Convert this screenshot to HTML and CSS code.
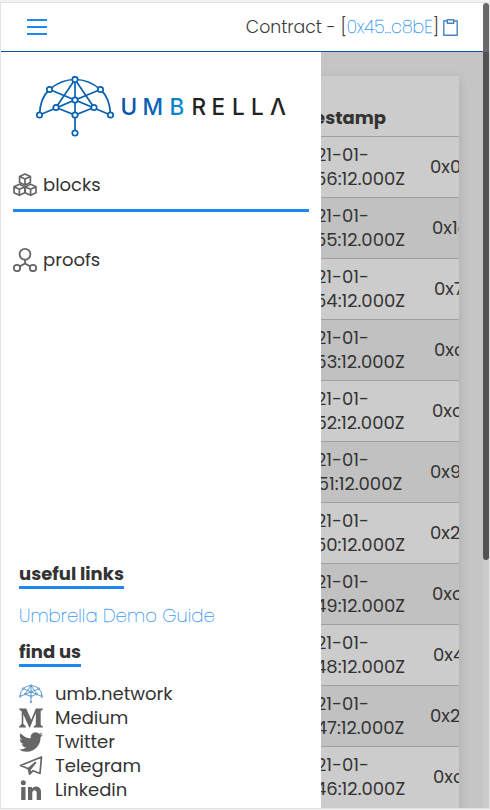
FILE: index.html
```html
<!DOCTYPE html>
<html lang="en">
<head>
<meta charset="utf-8">
<title>Umbrella blocks</title>
<link rel="stylesheet" href="styles.css">
</head>
<body>
<svg class="defs" width="0" height="0">
  <defs>
    <linearGradient id="word" gradientUnits="userSpaceOnUse" x1="86" y1="0" x2="150" y2="0"><stop offset="0" stop-color="#0651a5"/><stop offset=".55" stop-color="#0866b8"/><stop offset="1" stop-color="#0b93d5"/></linearGradient>
    <symbol id="umbrella" viewBox="0 0 78 62">
      <path d="M3.5 39Q4 22 13.5 13.5Q25 3.500 39 3.500T64.500 13.500Q74 22 74.500 39M13.500 13.500 39 24 64.500 13.500M39 3.500V57M39 3.500 20 31.500M39 3.500 58 31.500M3.500 39 39 24 74.500 39M20 31.500 39 39 58 31.500" fill="none" stroke="currentColor"/>
      <g fill="#fff" stroke="currentColor"><circle cx="39" cy="3.500" r="2.700"/><circle cx="13.500" cy="13.500" r="2.700"/><circle cx="64.500" cy="13.500" r="2.700"/><circle cx="39" cy="24" r="2.700"/><circle cx="20" cy="31.500" r="2.700"/><circle cx="58" cy="31.500" r="2.700"/><circle cx="3.500" cy="39" r="2.700"/><circle cx="39" cy="39" r="2.700"/><circle cx="74.500" cy="39" r="2.700"/><circle cx="39" cy="57" r="2.700"/></g>
    </symbol>
  </defs>
</svg>
<div class="app">
  <header class="topbar">
    <div class="burger"><i></i><i></i><i></i></div>
    <div class="contract"><span class="label">Contract - [</span><a>0x45...c8bE</a><span>]</span>
      <svg class="clip" width="15" height="17" viewBox="0 0 15 17" fill="none" stroke="#4584c4" stroke-width="1.4"><path d="M4 2H.8v14.200h13.400V2H11"/><path d="M4.300.8h6.400v3.400H4.300z"/></svg>
    </div>
  </header>
  <main class="content">
    <section class="card">
      <div class="head">Timestamp</div>
      <div class="rows" id="rows"></div>
    </section>
  </main>
  <aside class="sidebar">
    <svg class="logo" width="252" height="62" viewBox="0 0 252 62">
      <use class="brand" href="#umbrella" width="78" height="62"/>
      <text class="wordmark" y="38.600" x="84.500 106.500 133.500" fill="url(#word)">UMB</text>
      <text class="wordmark" y="38.600" x="155.500 175.500 196 215 234" fill="#222">RELLΛ</text>
    </svg>
    <nav class="nav">
      <a class="item active">
        <svg width="24" height="24" viewBox="0 0 24 24" fill="none" stroke="#666" stroke-width="1.700" stroke-linejoin="round"><path id="cube" d="M12 1l5.400 2.500v6L12 12 6.600 9.500v-6zM6.600 3.500 12 6l5.400-2.500M12 6v6"/><use href="#cube" x="-5.600" y="10.300"/><use href="#cube" x="5.600" y="10.300"/></svg>
        <span>blocks</span></a>
      <a class="item">
        <svg width="24" height="24" viewBox="0 0 24 24" fill="none" stroke="#666" stroke-width="1.800"><circle cx="12" cy="6.300" r="5.400"/><circle cx="4" cy="20" r="3.200"/><circle cx="20" cy="20" r="3.200"/><path d="M12 11.700V15.500L6.800 18.400M12 15.500l5.200 2.900"/></svg>
        <span>proofs</span></a>
    </nav>
    <div class="links">
      <h2>useful links</h2>
      <a class="guide">Umbrella Demo Guide</a>
      <h2>find us</h2>
      <ul class="social">
        <li><svg class="mini" width="24" height="20"><use href="#umbrella" width="24" height="20"/></svg><span>umb.network</span></li>
        <li><svg width="24" height="20" viewBox="0 0 24 20" fill="#666"><path d="M0 .5h7.200l5 11.300L16.800.5H24v.7l-2.300 1.900v13.700l2.300 1.900v.8h-9.500v-.8l2.300-1.900V5L11 19.500h-.7L4.300 6.200v9.600L7 18.700v.8H0v-.8l2.700-2.900V3.600L0 1.200z"/></svg><span>Medium</span></li>
        <li><svg width="24" height="24" viewBox="0 0 24 24" fill="#666"><path d="M23.950 4.570a10 10 0 0 1-2.820.78 4.960 4.960 0 0 0 2.160-2.730c-.95.560-2 .960-3.130 1.190a4.920 4.920 0 0 0-8.380 4.480A13.930 13.930 0 0 1 1.640 3.160a4.920 4.920 0 0 0 1.520 6.570 4.900 4.900 0 0 1-2.230-.61v.06a4.920 4.920 0 0 0 3.950 4.830 5 5 0 0 1-2.210.08 4.940 4.940 0 0 0 4.600 3.420A9.870 9.870 0 0 1 0 19.540a14 14 0 0 0 7.550 2.210c9.050 0 14-7.500 14-13.980 0-.21 0-.42-.02-.63a9.940 9.940 0 0 0 2.420-2.570z"/></svg><span>Twitter</span></li>
        <li><svg width="24" height="22" viewBox="0 0 24 22" fill="none" stroke="#666" stroke-width="1.700" stroke-linejoin="round"><path d="M1.500 10.500 22.500 2 21 18.500l-7-2.800-3.400 3.400-1.200-5.400z"/><path d="M9.300 13.700 16.500 7.500 11 14.600v4" fill="#666"/></svg><span>Telegram</span></li>
        <li><svg width="24" height="22" viewBox="0 0 24 22" fill="#666"><circle cx="4.300" cy="3.700" r="2.500"/><path d="M2.200 8h4.300v13H2.200zM9 8h4v1.800c2-3.500 9-3 9 3V21h-4.300v-7c0-3.800-4.400-3.500-4.400 0v7H9z"/></svg><span>Linkedin</span></li>
      </ul>
    </div>
  </aside>
  <div class="scroll"><div class="thumb"></div></div>
</div>
<script src="rows.js"></script>
</body>
</html>
```
FILE: styles.css
```css
* { box-sizing: border-box; }
body { margin: 0; background: #f2f2f2; font-family: Poppins, Inter, sans-serif; font-size: 18px; line-height: 24px; color: #333; }
.defs { display: block; height: 0; }
.app { position: relative; width: 490px; height: 807px; margin-top: 2px; border: 1px solid #e2e2e2; background: #c5c5c5; overflow: hidden; display: grid; grid-template-rows: 49px 1fr; grid-template-columns: 320px 1fr; }
.topbar { grid-column: 1 / 3; background: #fff; border-bottom: 1px solid #0b53a0; display: flex; justify-content: space-between; align-items: center; padding: 0 31px 0 26px; }
.burger { display: grid; gap: 5px; width: 20px; }
.burger i { height: 2px; background: #1f87f0; }
.contract { display: flex; align-items: center; font-size: 17.300px; font-weight: 300; color: #3a3a3a; }
.contract a { color: #3d9af5; font-weight: 100; -webkit-text-stroke: .3px #3d9af5; letter-spacing: .1px; }
.clip { margin-left: 4px; }
.sidebar { grid-column: 1; grid-row: 2; z-index: 1; background: #fff; padding: 24px 12px 0; display: flex; flex-direction: column; }
.content { grid-column: 1 / 3; grid-row: 2; padding: 24px 30px 0; overflow: hidden; min-width: 0; }
.card { height: 740px; background: #ccc; box-shadow: 0 3px 10px rgba(0,0,0,.14); overflow: hidden; width: 428px; }
.head { height: 60px; padding: 30px 73px 0 0; text-align: right; font-weight: 700; }
.row { height: 61px; border-top: 1px solid #a0a0a0; display: grid; grid-template-columns: 374px 54px; align-items: center; }
.row:nth-child(even) { background: #c1c1c1; }
.time span { display: block; }
.day { padding-right: 36px; text-align: right; }
.clock { padding-left: 284px; text-align: center; }
.hash { white-space: nowrap; overflow: hidden; }
.logo { display: block; margin-left: 23px; flex: none; overflow: visible; }
.brand { color: #0862b1; stroke-width: 1.7; }
.wordmark { font-family: Inter, sans-serif; font-size: 22.500px; font-weight: 500; }
.nav { display: flex; flex-direction: column; margin-top: 35px; }
.item { height: 75px; display: flex; gap: 6px; align-items: flex-start; }
.item svg { flex: none; }
.item.active { height: 39px; border-bottom: 3px solid #1f87f0; margin-bottom: 36px; }
.links { margin: auto 6px 6px; display: flex; flex-direction: column; align-items: flex-start; }
h2 { margin: 0; font-size: 18px; font-weight: 700; line-height: 24px; height: 27px; border-bottom: 3px solid #1f87f0; white-space: nowrap; }
.guide { margin: 15px 0 12px; color: #3d9af5; font-weight: 100; -webkit-text-stroke: .28px #3d9af5; letter-spacing: .1px; white-space: nowrap; }
.social { list-style: none; margin: 15px 0 0; padding: 0; }
.social li { height: 24px; display: flex; align-items: center; gap: 12px; }
.mini { color: #3585c6; stroke-width: 2.6; }
.scroll { position: absolute; right: 0; top: 0; width: 6px; height: 805px; z-index: 2; background: linear-gradient(#fff 49px, #ccc 49px); }
.thumb { height: 557px; border-radius: 3px; background: linear-gradient(#696969 49px, #525252 49px); }
```
FILE: rows.js
```js
const rows = [["56", "0x0f", 0], ["55", "0x1c", 2], ["54", "0x7a", 4], ["53", "0xc1", 4], ["52", "0xc4", 2], ["51", "0x9b", 0], ["50", "0x2e", 0], ["49", "0xc7", 2], ["48", "0x4d", 3], ["47", "0x2a", 0], ["46", "0xc9", 3]];
document.getElementById("rows").innerHTML = rows.map(([minute, hash, inset]) =>
  `<div class="row"><div class="time"><span class="day">2021-01-</span><span class="clock">${minute}:12.000Z</span></div><div class="hash" style="padding-left:${25 + inset}px">${hash}</div></div>`).join("");
```
